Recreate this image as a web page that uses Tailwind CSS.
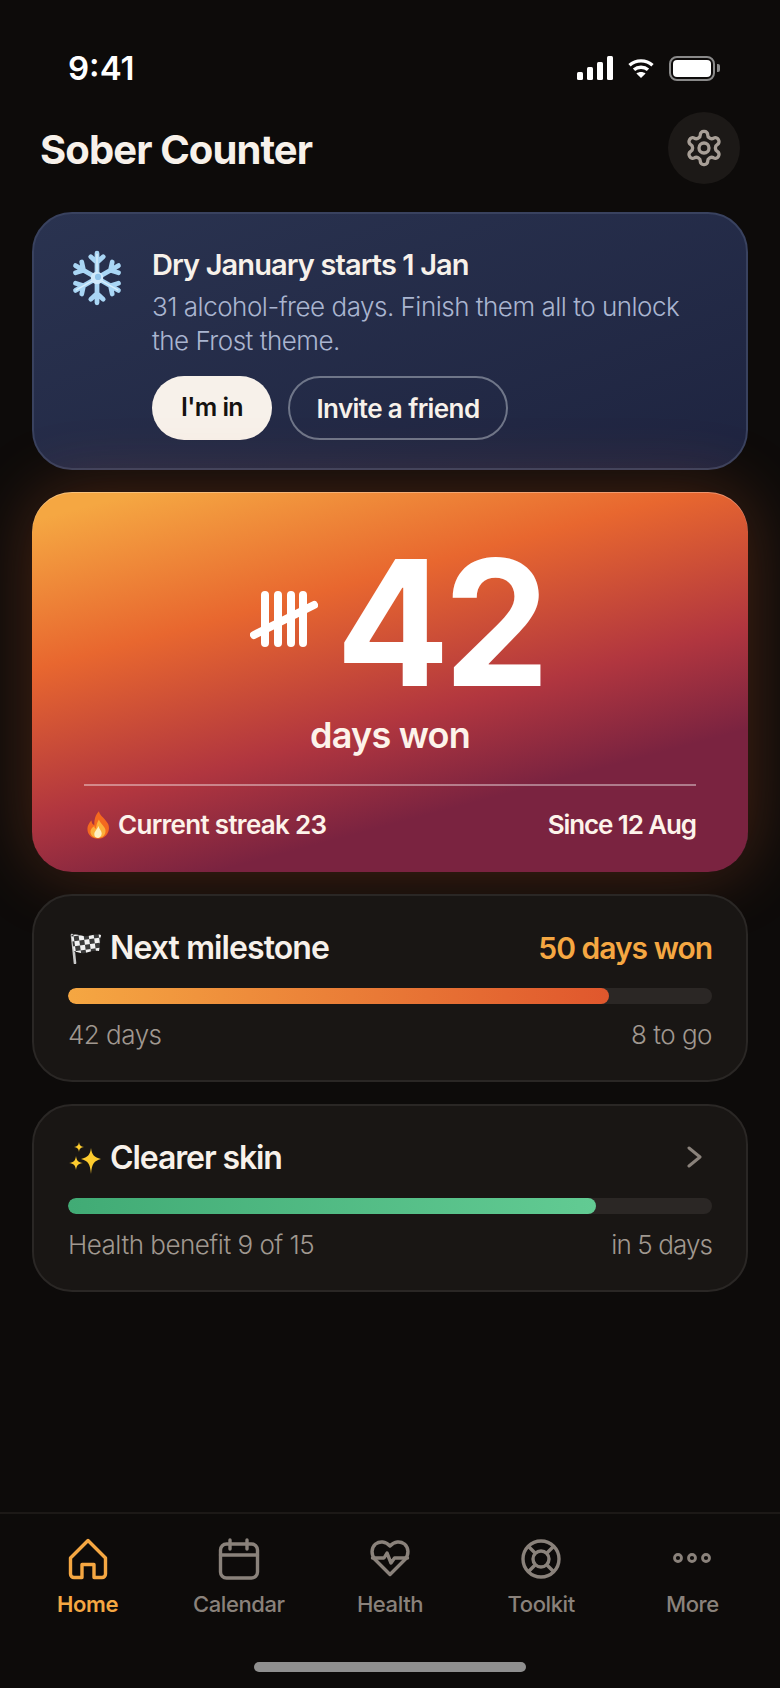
<!DOCTYPE html>
<html lang="en">
<head>
    <meta charset="UTF-8">
    <meta name="viewport" content="width=device-width, initial-scale=1.0">
    <title>Sober Counter</title>
    <script src="https://cdn.jsdelivr.net/npm/@tailwindcss/browser@4"></script>
</head>
<body class="bg-[#0d0b0a] font-['Inter',sans-serif] text-[#f7f1ea]">
    <div class="w-[780px] h-[1688px] flex flex-col overflow-hidden">
        <!-- status bar -->
        <div class="flex items-center justify-between h-[56px] mt-[40px] pl-[68px] pr-[60px]">
            <span class="text-[33px] leading-none font-semibold text-white">9:41</span>
            <div class="flex items-center gap-[15px]">
                <svg width="36" height="24" viewBox="0 0 36 24" fill="#fff">
                    <rect x="0" y="16" width="6" height="8" rx="1.5"/>
                    <rect x="10" y="11" width="6" height="13" rx="1.5"/>
                    <rect x="20" y="6" width="6" height="18" rx="1.5"/>
                    <rect x="30" y="0" width="6" height="24" rx="1.5"/>
                </svg>
                <svg width="26" height="20" viewBox="0 0 26 20" fill="none" stroke="#fff" stroke-width="3.4">
                    <path d="M1.5 7.2C7.8 1.4 18.2 1.4 24.5 7.2"/>
                    <path d="M6 11.8C9.8 8.4 16.2 8.4 20 11.8"/>
                    <path d="M13 20l-4.6-4.6c2.6-2 6.6-2 9.2 0z" fill="#fff" stroke="none"/>
                </svg>
                <div class="flex items-center gap-[2px]">
                    <div class="w-[46px] h-[25px] rounded-[8px] border-[2.5px] border-[#8a8a8a] p-[2px]">
                        <div class="w-full h-full rounded-[4px] bg-white"></div>
                    </div>
                    <div class="w-[3px] h-[8px] rounded-r-[2px] bg-[#8a8a8a]"></div>
                </div>
            </div>
        </div>

        <!-- title -->
        <div class="flex items-center justify-between h-[72px] mt-[16px] pl-[40px] pr-[40px]">
            <h1 class="mt-[4px] text-[40px] font-bold tracking-[-0.9px]">Sober Counter</h1>
            <div class="w-[72px] h-[72px] rounded-full bg-[#1c1917] flex items-center justify-center">
                <svg width="40" height="40" viewBox="0 0 24 24" fill="none" stroke="#a89f97" stroke-width="2" stroke-linecap="round" stroke-linejoin="round">
                    <path d="M12.22 2h-.44a2 2 0 0 0-2 2v.18a2 2 0 0 1-1 1.73l-.43.25a2 2 0 0 1-2 0l-.15-.08a2 2 0 0 0-2.73.73l-.22.38a2 2 0 0 0 .73 2.73l.15.1a2 2 0 0 1 1 1.72v.51a2 2 0 0 1-1 1.74l-.15.09a2 2 0 0 0-.73 2.73l.22.38a2 2 0 0 0 2.73.73l.15-.08a2 2 0 0 1 2 0l.43.25a2 2 0 0 1 1 1.73V20a2 2 0 0 0 2 2h.44a2 2 0 0 0 2-2v-.18a2 2 0 0 1 1-1.73l.43-.25a2 2 0 0 1 2 0l.15.08a2 2 0 0 0 2.73-.73l.22-.39a2 2 0 0 0-.73-2.73l-.15-.08a2 2 0 0 1-1-1.74v-.5a2 2 0 0 1 1-1.74l.15-.09a2 2 0 0 0 .73-2.73l-.22-.38a2 2 0 0 0-2.73-.73l-.15.08a2 2 0 0 1-2 0l-.43-.25a2 2 0 0 1-1-1.73V4a2 2 0 0 0-2-2z"/>
                    <circle cx="12" cy="12" r="3"/>
                </svg>
            </div>
        </div>

        <div class="flex flex-col gap-[22px] mt-[28px] mx-[32px]">
            <!-- dry january -->
            <div class="h-[258px] rounded-[40px] border-2 border-[#39425f] bg-[linear-gradient(160deg,#2a3350,#1e2440)] pt-[36px] pl-[36px] flex gap-[28px]">
                <svg class="-mt-[2px] shrink-0" width="54" height="60" viewBox="-26 -29 52 58">
                    <g stroke="#a9d6f5" stroke-width="4.6" stroke-linecap="round" stroke-linejoin="round" fill="none">
                        <g><path d="M0 0V-24M-6 -20.5L0 -15L6 -20.5"/></g>
                        <g transform="rotate(60)"><path d="M0 0V-24M-6 -20.5L0 -15L6 -20.5"/></g>
                        <g transform="rotate(120)"><path d="M0 0V-24M-6 -20.5L0 -15L6 -20.5"/></g>
                        <g transform="rotate(180)"><path d="M0 0V-24M-6 -20.5L0 -15L6 -20.5"/></g>
                        <g transform="rotate(240)"><path d="M0 0V-24M-6 -20.5L0 -15L6 -20.5"/></g>
                        <g transform="rotate(300)"><path d="M0 0V-24M-6 -20.5L0 -15L6 -20.5"/></g>
                    </g>
                    <g stroke="#d7eefc" stroke-width="1.4" stroke-linecap="round" fill="none">
                        <path d="M0 -6V-23"/>
                        <path d="M-5 3L-20 11.5M5 3L20 11.5"/>
                    </g>
                    <circle r="6" fill="#cfe9fb"/>
                    <circle r="3" cx="1" cy="-1" fill="#8fc3ea"/>
                </svg>
                <div class="flex flex-col">
                    <h2 class="-mt-[3px] text-[29px] leading-[36px] font-semibold tracking-[-0.9px] text-[#f7f1ea]">Dry January starts 1 Jan</h2>
                    <p class="mt-[7px] w-[540px] text-[26px] leading-[34px] font-light tracking-[-0.5px] text-[#aab5d0]">31 alcohol-free days. Finish them all to unlock the Frost theme.</p>
                    <div class="flex gap-[16px] mt-[18px]">
                        <div class="h-[64px] w-[120px] rounded-full bg-[#f7f1ea] flex items-center justify-center text-[25px] font-semibold tracking-[-0.6px] text-[#141210]">I'm in</div>
                        <div class="h-[64px] w-[220px] rounded-full border-2 border-[#6f7689] flex items-center justify-center text-[26px] font-semibold tracking-[-0.6px] text-[#f7f1ea]">Invite a friend</div>
                    </div>
                </div>
            </div>

            <!-- counter -->
            <div class="h-[380px] rounded-[40px] bg-[linear-gradient(165deg,#f5a742_5%,#e8672f_31%,#b1363f_57%,#7a2340_75%)] shadow-[0_0_70px_rgba(232,103,47,0.28),inset_0_1px_0_rgba(255,255,255,0.3)] px-[52px] flex flex-col">
                <div class="flex items-center justify-center pl-[12px] gap-[18px] h-[188px] mt-[35px]">
                    <svg class="mb-[5px] shrink-0" width="68" height="56" viewBox="0 0 68 56" fill="none" stroke="#fff" stroke-width="8" stroke-linecap="round">
                        <path d="M15 4V52M28 4V52M41 4V52M53 4V52"/>
                        <path d="M4 44L64 14"/>
                    </svg>
                    <span class="inline-block mt-[2px] w-[206px] origin-left scale-x-[0.96] text-[175px] leading-none font-bold tracking-[-6px] text-white">42</span>
                </div>
                <div class="text-center text-[36px] leading-[44px] font-semibold tracking-[-0.8px] text-[#fdf3ea] -mt-[2px]">days won</div>
                <div class="h-[2px] bg-white/40 mt-[27px]"></div>
                <div class="flex items-center justify-between mt-[22px] text-[26px] leading-[34px] font-semibold tracking-[-0.7px] text-[#fdf3ea]">
                    <div class="flex items-center gap-[8px]">
                        <svg class="ml-[2px]" width="24" height="28" viewBox="0 0 26 30">
                            <path d="M14 0C15 5 21 8 24 14C27 21 22 30 13 30C5 30 0 24 2 16C3 13 5 11 6 10C6 13 7 14 9 15C9 9 10 4 14 0Z" fill="#f4691f"/>
                            <path d="M14 9C15 13 20 16 21 20C22 26 18 29 13 29C8 29 4 26 5 21C6 18 8 17 9 16C9 18 10 19 11 19C11 16 12 12 14 9Z" fill="#fbb03b"/>
                            <path d="M13.500 16C14 19 17 21 17 24C17 27 15 29 13 29C10 29 9 27 9 25C9 22 12 20 13.500 16Z" fill="#fdf0c4"/>
                        </svg>
                        <span>Current streak 23</span>
                    </div>
                    <span class="tracking-[-1.1px]">Since 12 Aug</span>
                </div>
            </div>

            <!-- next milestone -->
            <div class="h-[188px] rounded-[40px] border-2 border-[#2a2725] bg-[#191614] px-[34px] pt-[30px]">
                <div class="flex items-center justify-between h-[44px]">
                    <div class="flex items-center gap-[8px]">
                        <svg class="shrink-0" width="34" height="32" viewBox="0 0 34 32">
                            <defs>
                                <pattern id="check" width="10" height="10" patternUnits="userSpaceOnUse" patternTransform="rotate(-8)">
                                    <rect width="10" height="10" fill="#f2f2f2"/>
                                    <rect width="5" height="5" fill="#3a3a3a"/>
                                    <rect x="5" y="5" width="5" height="5" fill="#3a3a3a"/>
                                </pattern>
                            </defs>
                            <path d="M4 3L7 31" stroke="#c9c9c9" stroke-width="2.6" stroke-linecap="round"/>
                            <path d="M3.500 3C10 1 14 5 20 4C25 3 29 2 33 3C32 8 32 14 31 19C25 18 22 20 17 21C12 22 9 19 6 20Z" fill="url(#check)"/>
                        </svg>
                        <span class="text-[32px] font-semibold tracking-[-0.9px]">Next milestone</span>
                    </div>
                    <span class="text-[30px] font-semibold tracking-[-1px] text-[#f5a742]">50 days won</span>
                </div>
                <div class="h-[16px] rounded-full bg-[#2b2725] mt-[18px] overflow-hidden">
                    <div class="h-full rounded-full bg-[linear-gradient(90deg,#f5a742,#e0572d)]" style="width:84%"></div>
                </div>
                <div class="flex justify-between mt-[14px] text-[26px] leading-[34px] font-light tracking-[-0.5px] text-[#a09890]">
                    <span>42 days</span>
                    <span>8 to go</span>
                </div>
            </div>

            <!-- health benefit -->
            <div class="h-[188px] rounded-[40px] border-2 border-[#2a2725] bg-[#191614] px-[34px] pt-[30px]">
                <div class="flex items-center justify-between h-[44px]">
                    <div class="flex items-center gap-[8px]">
                        <svg class="shrink-0" width="34" height="32" viewBox="0 0 34 32" fill="#fdcb2e">
                            <path d="M23 6C24 13 26 15 33 17C26 19 24 21 23 32C22 21 20 19 13 17C20 15 22 13 23 6Z"/>
                            <path d="M11 0C11.600 3.500 12.500 4.400 16 5C12.500 5.600 11.600 6.500 11 10C10.400 6.500 9.500 5.600 6 5C9.500 4.400 10.400 3.500 11 0Z"/>
                            <path d="M8 14C8.800 19 10 20.200 15 21C10 21.800 8.800 23 8 28C7.200 23 6 21.800 1 21C6 20.200 7.200 19 8 14Z"/>
                        </svg>
                        <span class="text-[32px] font-semibold tracking-[-1.1px]">Clearer skin</span>
                    </div>
                    <svg class="mr-[10px] mb-[3px]" width="15" height="22" viewBox="0 0 15 22" fill="none" stroke="#8a827b" stroke-width="3" stroke-linecap="round" stroke-linejoin="round">
                        <path d="M2 2L13 11L2 20"/>
                    </svg>
                </div>
                <div class="h-[16px] rounded-full bg-[#2b2725] mt-[18px] overflow-hidden">
                    <div class="h-full rounded-full bg-[linear-gradient(90deg,#41ab75,#62cb93)]" style="width:82%"></div>
                </div>
                <div class="flex justify-between mt-[14px] text-[26px] leading-[34px] font-light tracking-[-0.5px] text-[#a09890]">
                    <span>Health benefit 9 of 15</span>
                    <span class="tracking-[-0.9px]">in 5 days</span>
                </div>
            </div>
        </div>

        <!-- bottom nav -->
        <div class="mt-auto border-t-2 border-[#1c1917] h-[176px] px-[12px] pt-[24px] relative">
            <div class="grid grid-cols-5">
                <div class="flex flex-col items-center gap-[10px] text-[#f5a742]">
                    <svg width="42" height="42" viewBox="0 0 42 42" fill="none" stroke="#f5a742" stroke-width="3.400" stroke-linejoin="round">
                        <path d="M21 2.500L38.500 20V36C38.500 38 37 39.500 35 39.500H27V26.500H15V39.500H7C5 39.500 3.500 38 3.500 36V20Z"/>
                    </svg>
                    <span class="text-[22px] leading-[28px] font-semibold tracking-[-0.4px]">Home</span>
                </div>
                <div class="flex flex-col items-center gap-[10px] text-[#8a827b]">
                    <svg width="42" height="42" viewBox="0 0 42 42" fill="none" stroke="#8a827b" stroke-width="3.400" stroke-linecap="round">
                        <rect x="2.500" y="6" width="37" height="34" rx="6"/>
                        <path d="M2.500 17H39.500M12 2V11M29 2V11"/>
                    </svg>
                    <span class="text-[22px] leading-[28px] font-medium tracking-[-0.4px]">Calendar</span>
                </div>
                <div class="flex flex-col items-center gap-[10px] text-[#8a827b]">
                    <svg width="42" height="42" viewBox="0 0 42 42" fill="none" stroke="#8a827b" stroke-width="3.400" stroke-linecap="round" stroke-linejoin="round">
                        <path d="M21 36.500L6 21.500C2 17 2 10 6.500 6C10.500 3 16.500 3 21 8C25.500 3 31.500 3 35.500 6C40 10 40 17 36 21.500Z"/>
                        <path d="M3.500 20H15L18 15L22 25L25.500 20H38.500"/>
                    </svg>
                    <span class="text-[22px] leading-[28px] font-medium tracking-[-0.4px]">Health</span>
                </div>
                <div class="flex flex-col items-center gap-[10px] text-[#8a827b]">
                    <svg width="42" height="42" viewBox="0 0 42 42" fill="none" stroke="#8a827b" stroke-width="3.400">
                        <circle cx="21" cy="21" r="18"/>
                        <circle cx="21" cy="21" r="8"/>
                        <path d="M8.300 8.300L15.300 15.300M26.700 15.300L33.700 8.300M26.700 26.700L33.700 33.700M15.300 26.700L8.300 33.700"/>
                    </svg>
                    <span class="text-[22px] leading-[28px] font-medium tracking-[-0.4px]">Toolkit</span>
                </div>
                <div class="flex flex-col items-center gap-[10px] text-[#8a827b]">
                    <svg width="42" height="42" viewBox="0 0 42 42" fill="none" stroke="#8a827b" stroke-width="2.800">
                        <circle cx="7" cy="20" r="3.500"/>
                        <circle cx="21" cy="20" r="3.500"/>
                        <circle cx="35" cy="20" r="3.500"/>
                    </svg>
                    <span class="text-[22px] leading-[28px] font-medium tracking-[-0.4px]">More</span>
                </div>
            </div>
            <div class="absolute left-[254px] bottom-[16px] w-[272px] h-[10px] rounded-full bg-[#8f8f8f]"></div>
        </div>
    </div>
</body>
</html>
